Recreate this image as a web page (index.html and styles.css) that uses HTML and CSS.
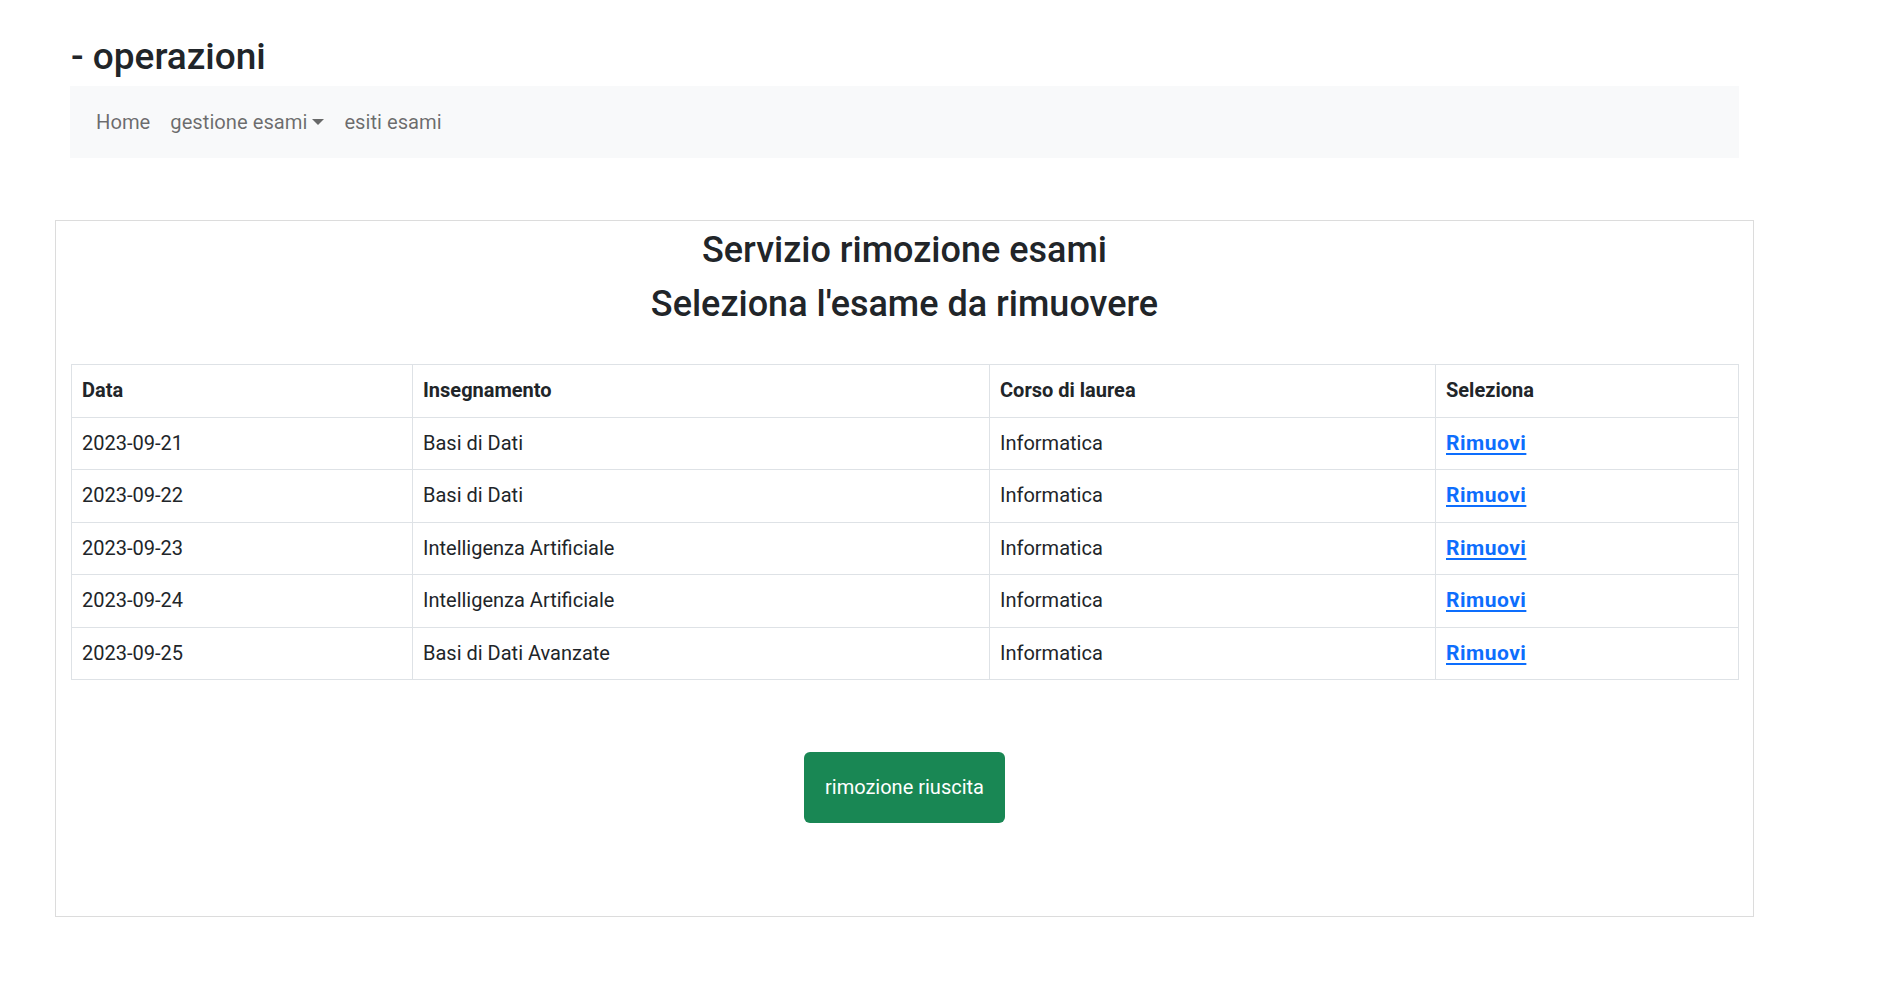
FILE: index.html
```html
<!DOCTYPE html>
<html lang="it">
<head>
<meta charset="utf-8">
<title>operazioni</title>
<link rel="stylesheet" href="styles.css">
</head>
<body>
<div class="page">
  <header class="top">
    <h1 class="title">- operazioni</h1>
    <nav class="navbar">
      <a class="nav-link" href="#">Home</a>
      <a class="nav-link dropdown-toggle" href="#">gestione esami</a>
      <a class="nav-link" href="#">esiti esami</a>
    </nav>
  </header>

  <main class="card">
    <div class="headings">
      <h3>Servizio rimozione esami</h3>
      <h3>Seleziona l'esame da rimuovere</h3>
    </div>
    <table class="exams">
      <colgroup>
        <col class="c1"><col class="c2"><col class="c3"><col class="c4">
      </colgroup>
      <thead>
        <tr><th>Data</th><th>Insegnamento</th><th>Corso di laurea</th><th>Seleziona</th></tr>
      </thead>
      <tbody>
        <tr><td>2023-09-21</td><td>Basi di Dati</td><td>Informatica</td><td><a class="remove" href="#">Rimuovi</a></td></tr>
        <tr><td>2023-09-22</td><td>Basi di Dati</td><td>Informatica</td><td><a class="remove" href="#">Rimuovi</a></td></tr>
        <tr><td>2023-09-23</td><td>Intelligenza Artificiale</td><td>Informatica</td><td><a class="remove" href="#">Rimuovi</a></td></tr>
        <tr><td>2023-09-24</td><td>Intelligenza Artificiale</td><td>Informatica</td><td><a class="remove" href="#">Rimuovi</a></td></tr>
        <tr><td>2023-09-25</td><td>Basi di Dati Avanzate</td><td>Informatica</td><td><a class="remove" href="#">Rimuovi</a></td></tr>
      </tbody>
    </table>
    <div class="actions">
      <button class="btn-success" type="button">rimozione riuscita</button>
    </div>
  </main>
</div>
</body>
</html>
```
FILE: styles.css
```css
* { box-sizing: border-box; }

html, body {
  margin: 0;
  padding: 0;
  background: #fff;
}

body {
  font-family: "Segoe UI", Roboto, "Noto Sans", "Liberation Sans", sans-serif;
  font-size: 20px;
  line-height: 30px;
  color: #212529;
}

.page {
  padding-top: 34px;
  padding-bottom: 40px;
}

.top {
  margin-left: 70px;
  width: 1669px;
}

.title {
  margin: 0 0 6px 1px;
  font-size: 37px;
  font-weight: 500;
  line-height: 46px;
  color: #212529;
}

.navbar {
  display: flex;
  align-items: center;
  height: 72px;
  padding: 0 16px;
  background: #f8f9fa;
}

.nav-link {
  display: block;
  padding: 10px 10px;
  color: rgba(0, 0, 0, 0.58);
  text-decoration: none;
  font-size: 20.2px;
  line-height: 30px;
}

.dropdown-toggle::after {
  content: "";
  display: inline-block;
  margin-left: 5px;
  vertical-align: 4px;
  border-top: 6px solid;
  border-right: 6px solid transparent;
  border-left: 6px solid transparent;
  border-bottom: 0;
}

.card {
  margin: 62px 0 0 55px;
  width: 1699px;
  border: 1px solid #dcdcdc;
  padding: 8px 15px 93px;
}

.headings {
  text-align: center;
  margin-bottom: 39px;
}

.headings h3 {
  margin: 0 0 12px;
  font-size: 36px;
  font-weight: 500;
  line-height: 42px;
}

.headings h3:last-child { margin-bottom: 0; }

.exams {
  width: 1667px;
  border-collapse: collapse;
  table-layout: fixed;
}

.c1 { width: 341px; }
.c2 { width: 577px; }
.c3 { width: 446px; }
.c4 { width: 303px; }

.exams th,
.exams td {
  border: 1px solid #dee2e6;
  padding: 10px 10px;
  line-height: 31.5px;
  text-align: left;
  vertical-align: middle;
}

.exams th {
  font-weight: 700;
}

.remove {
  color: #0d6efd;
  font-size: 21px;
  font-weight: 700;
  letter-spacing: 0.5px;
  text-decoration: underline;
  text-decoration-thickness: 2px;
  text-underline-offset: 3px;
}

.actions {
  margin-top: 72px;
  display: flex;
  justify-content: center;
}

.btn-success {
  display: inline-block;
  font-family: inherit;
  font-size: 20px;
  line-height: 31px;
  padding: 20px 21px;
  color: #fff;
  background: #198754;
  border: 0;
  border-radius: 6px;
  cursor: pointer;
}
```
